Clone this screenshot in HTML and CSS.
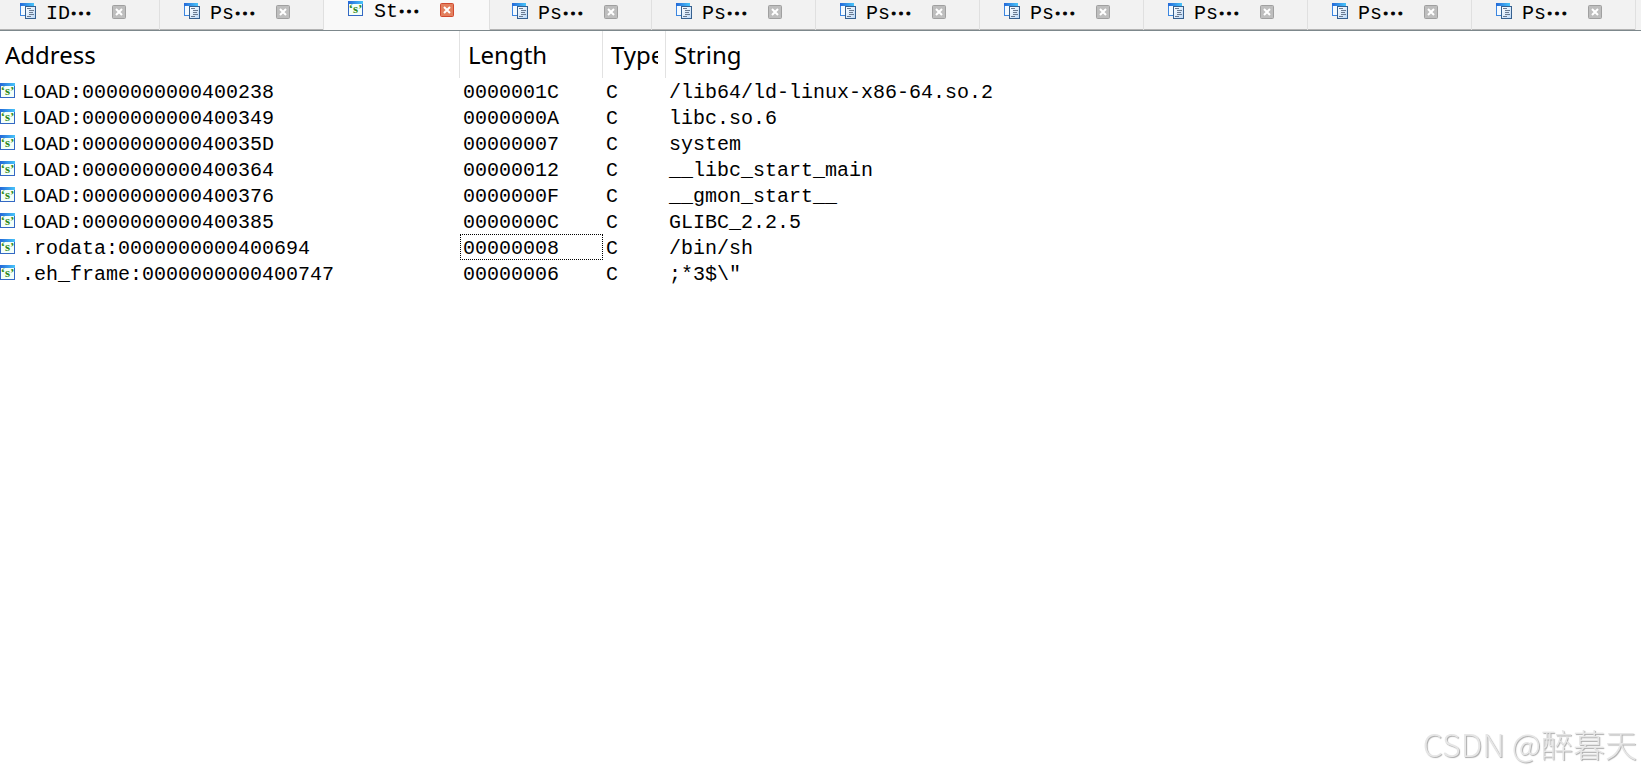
FILE: index.html
```html
<!DOCTYPE html>
<html lang="en">
<head>
	<meta charset="UTF-8">
	<title>Strings</title>
	<link rel="stylesheet" href="styles.css">
</head>
<body>
	<svg class="defs" aria-hidden="true">
		<defs>
			<linearGradient id="bar" x1="0" y1="0" x2="1" y2="0">
				<stop offset="0" stop-color="#2468d8"/>
				<stop offset="1" stop-color="#48c4fa"/>
			</linearGradient>
			<linearGradient id="sheet" x1="0" y1="0" x2="1" y2="1">
				<stop offset="0" stop-color="#ffffff"/>
				<stop offset="1" stop-color="#bcd8f6"/>
			</linearGradient>
		</defs>
		<symbol id="doc" viewBox="0 0 16 16">
			<rect x="0.5" y="0.5" width="13" height="12" fill="#f4faff" stroke="#3c86e0"/>
			<rect x="0" y="0" width="14" height="3" fill="url(#bar)"/>
			<rect x="5.500" y="3.500" width="10" height="12" fill="url(#sheet)" stroke="#36608f"/>
			<path d="M7 5.500h4M9 7.500h5M9 9.500h4M9 11.500h5M7 13.500h4" stroke="#6a7a90" fill="none"/>
		</symbol>
		<symbol id="str" viewBox="0 0 15 15">
			<rect x="0.5" y="0.5" width="14" height="14" fill="#f4fff8" stroke="#3468c4"/>
			<rect x="0" y="0" width="15" height="3" fill="url(#bar)"/>
			<text class="glyph" x="7.500" y="12" text-anchor="middle">‘s’</text>
		</symbol>
		<symbol id="close" viewBox="0 0 14 14">
			<rect class="edge" x="0.5" y="0.5" width="13" height="13" rx="1"/>
			<path d="M4 4l6 6M10 4l-6 6" stroke="#fff" stroke-width="2" fill="none"/>
		</symbol>
	</svg>

	<nav class="tabs">
		<div class="tab"><button class="name"><svg class="icon"><use href="#doc"/></svg><span>ID<i>…</i></span></button><button class="close" aria-label="Close"><svg><use href="#close"/></svg></button></div>
		<div class="tab"><button class="name"><svg class="icon"><use href="#doc"/></svg><span>Ps<i>…</i></span></button><button class="close" aria-label="Close"><svg><use href="#close"/></svg></button></div>
		<div class="tab active"><button class="name"><svg class="icon small"><use href="#str"/></svg><span>St<i>…</i></span></button><button class="close" aria-label="Close"><svg><use href="#close"/></svg></button></div>
		<div class="tab"><button class="name"><svg class="icon"><use href="#doc"/></svg><span>Ps<i>…</i></span></button><button class="close" aria-label="Close"><svg><use href="#close"/></svg></button></div>
		<div class="tab"><button class="name"><svg class="icon"><use href="#doc"/></svg><span>Ps<i>…</i></span></button><button class="close" aria-label="Close"><svg><use href="#close"/></svg></button></div>
		<div class="tab"><button class="name"><svg class="icon"><use href="#doc"/></svg><span>Ps<i>…</i></span></button><button class="close" aria-label="Close"><svg><use href="#close"/></svg></button></div>
		<div class="tab"><button class="name"><svg class="icon"><use href="#doc"/></svg><span>Ps<i>…</i></span></button><button class="close" aria-label="Close"><svg><use href="#close"/></svg></button></div>
		<div class="tab"><button class="name"><svg class="icon"><use href="#doc"/></svg><span>Ps<i>…</i></span></button><button class="close" aria-label="Close"><svg><use href="#close"/></svg></button></div>
		<div class="tab"><button class="name"><svg class="icon"><use href="#doc"/></svg><span>Ps<i>…</i></span></button><button class="close" aria-label="Close"><svg><use href="#close"/></svg></button></div>
		<div class="tab"><button class="name"><svg class="icon"><use href="#doc"/></svg><span>Ps<i>…</i></span></button><button class="close" aria-label="Close"><svg><use href="#close"/></svg></button></div>
	</nav>

	<table class="strings">
		<colgroup>
			<col class="c-address">
			<col class="c-length">
			<col class="c-type">
			<col>
		</colgroup>
		<thead>
			<tr><th><div>Address</div></th><th><div>Length</div></th><th><div>Type</div></th><th><div>String</div></th></tr>
		</thead>
		<tbody>
			<tr><td><svg><use href="#str"/></svg>LOAD:0000000000400238</td><td>0000001C</td><td>C</td><td>/lib64/ld-linux-x86-64.so.2</td></tr>
			<tr><td><svg><use href="#str"/></svg>LOAD:0000000000400349</td><td>0000000A</td><td>C</td><td>libc.so.6</td></tr>
			<tr><td><svg><use href="#str"/></svg>LOAD:000000000040035D</td><td>00000007</td><td>C</td><td>system</td></tr>
			<tr><td><svg><use href="#str"/></svg>LOAD:0000000000400364</td><td>00000012</td><td>C</td><td>__libc_start_main</td></tr>
			<tr><td><svg><use href="#str"/></svg>LOAD:0000000000400376</td><td>0000000F</td><td>C</td><td>__gmon_start__</td></tr>
			<tr><td><svg><use href="#str"/></svg>LOAD:0000000000400385</td><td>0000000C</td><td>C</td><td>GLIBC_2.2.5</td></tr>
			<tr><td><svg><use href="#str"/></svg>.rodata:0000000000400694</td><td class="focus">00000008</td><td>C</td><td>/bin/sh</td></tr>
			<tr><td><svg><use href="#str"/></svg>.eh_frame:0000000000400747</td><td>00000006</td><td>C</td><td>;*3$\"</td></tr>
		</tbody>
	</table>

	<div class="watermark">CSDN @醉暮天</div>
</body>
</html>
```

FILE: styles.css
```css
*{
	padding: 0;
	margin: 0;
	box-sizing: border-box;
}
body{
	background: #fff;
	color: #000;
	font-family: "Liberation Mono", "Noto Sans CJK SC", monospace;
	font-size: 20px;
	overflow: hidden;
}
button{
	border: 0;
	background: none;
	font: inherit;
	color: inherit;
}
.defs{
	position: absolute;
	width: 0;
	height: 0;
}
.glyph{
	font: bold 13px "Liberation Serif", serif;
	fill: #2f8a1c;
}

/* tabs */
.tabs{
	display: flex;
	height: 31px;
	margin-left: -4px;
	background: #f2f2f2;
	border-bottom: 1px solid #7d888c;
}
.tab{
	flex: 0 0 164px;
	display: flex;
	align-items: flex-start;
	padding: 3px 0 0 24px;
	border-right: 1px solid #e0e0e0;
	box-shadow: inset 0 -1px #b4b4b4;
}
.tab.active{
	flex-basis: 166px;
	padding-top: 1px;
	background: #f9f9f9;
	box-shadow: none;
}
.active + .tab{
	flex-basis: 162px;
	padding-left: 22px;
}
.tab .name{
	display: flex;
	width: 92px;
	line-height: 22px;
	text-align: left;
}
.tab .name span{
	display: flex;
}
.tab i{
	font-family: "Noto Sans CJK SC", sans-serif;
	font-size: 22px;
	font-style: normal;
	line-height: 16px;
	-webkit-text-stroke: 1px #000;
}
.icon{
	flex: none;
	width: 16px;
	height: 16px;
	margin-right: 10px;
}
.icon.small{
	width: 15px;
	height: 15px;
	margin-right: 11px;
}
.close{
	height: 14px;
	margin-top: 2px;
}
.close svg{
	display: block;
	width: 14px;
	height: 14px;
	fill: #bebebe;
	stroke: #a0a0a0;
}
.active .close svg{
	fill: #e3805e;
	stroke: #d04a30;
}

/* strings list */
.strings{
	width: 100%;
	table-layout: fixed;
	border-collapse: separate;
	border-spacing: 0;
}
.c-address{
	width: 460px;
}
.c-length{
	width: 143px;
}
.c-type{
	width: 63px;
}
.strings th{
	height: 47px;
	padding: 0 7px 0 8px;
	border-right: 1px solid #e2e2e2;
	font: 24px "Noto Sans", sans-serif;
	text-align: left;
}
.strings th:first-child{
	padding-left: 5px;
}
.strings th:last-child{
	border-right: 0;
}
.strings th div{
	overflow: hidden;
}
.strings td{
	height: 26px;
	padding: 4px 0 0 3px;
	line-height: 22px;
	white-space: pre;
}
.strings td:first-child{
	display: flex;
	gap: 7px;
	padding-left: 0;
}
.strings td svg{
	width: 15px;
	height: 15px;
	margin-top: 1px;
}
.strings .focus{
	outline: 1px dotted #000;
	outline-offset: -1px;
}

.watermark{
	position: fixed;
	right: 4px;
	bottom: 4px;
	font: 300 32px/54px "Noto Sans CJK SC", sans-serif;
	color: #e6e6e6;
	text-shadow: 1px 1px 1px #aaa;
}
```
